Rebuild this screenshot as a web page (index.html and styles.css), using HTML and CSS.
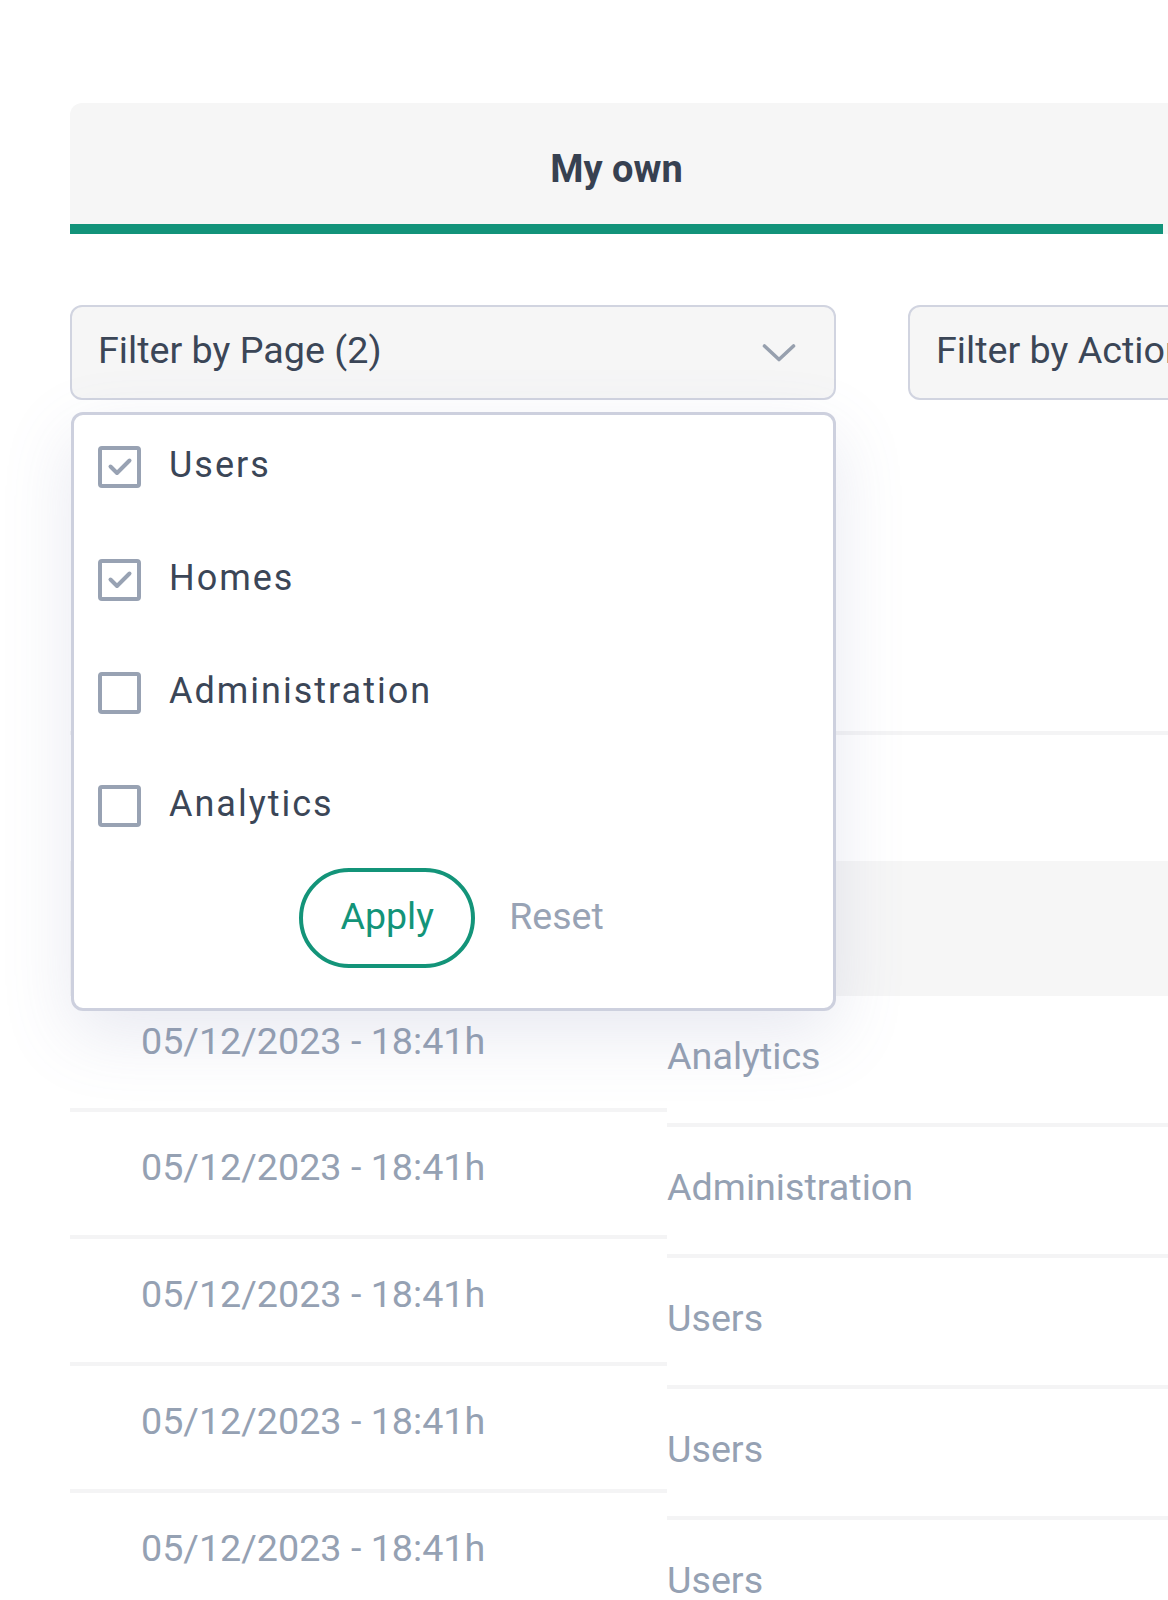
FILE: index.html
```html
<!DOCTYPE html>
<html lang="en">
<head>
<meta charset="utf-8">
<title>Activity log</title>
<link rel="stylesheet" href="styles.css">
</head>
<body>
<div class="page">
  <div class="tabs">
    <div class="tab tab-active">My own</div>
    <div class="tab"></div>
  </div>

  <div class="filters">
    <div class="filter-wrap">
      <div class="filter">
        <span class="filter-label">Filter by Page (2)</span>
        <svg class="chevron" width="34" height="20" viewBox="0 0 34 20"><path d="M2.5 3 L17 16.5 L31.5 3" fill="none" stroke="#97a0ae" stroke-width="3.6" stroke-linecap="round" stroke-linejoin="round"/></svg>
      </div>
      <div class="dropdown">
        <label class="option">
          <span class="box checked"><svg width="34" height="34" viewBox="0 0 34 34"><path d="M7.5 16.5 L14 23 L26.5 10.5" fill="none" stroke="#98a2b3" stroke-width="4" stroke-linecap="round" stroke-linejoin="round"/></svg></span>
          <span class="option-label">Users</span>
        </label>
        <label class="option">
          <span class="box checked"><svg width="34" height="34" viewBox="0 0 34 34"><path d="M7.5 16.5 L14 23 L26.5 10.5" fill="none" stroke="#98a2b3" stroke-width="4" stroke-linecap="round" stroke-linejoin="round"/></svg></span>
          <span class="option-label">Homes</span>
        </label>
        <label class="option">
          <span class="box"></span>
          <span class="option-label">Administration</span>
        </label>
        <label class="option">
          <span class="box"></span>
          <span class="option-label">Analytics</span>
        </label>
        <div class="actions">
          <button class="btn-apply">Apply</button>
          <button class="btn-reset">Reset</button>
        </div>
      </div>
    </div>
    <div class="filter">
      <span class="filter-label">Filter by Action</span>
      <svg class="chevron" width="34" height="20" viewBox="0 0 34 20"><path d="M2.5 3 L17 16.5 L31.5 3" fill="none" stroke="#97a0ae" stroke-width="3.6" stroke-linecap="round" stroke-linejoin="round"/></svg>
    </div>
  </div>

  <div class="summary"></div>

  <div class="table">
    <div class="thead"></div>
    <div class="tbody">
      <div class="col col-date">
        <div class="cell">05/12/2023 - 18:41h</div>
        <div class="cell">05/12/2023 - 18:41h</div>
        <div class="cell">05/12/2023 - 18:41h</div>
        <div class="cell">05/12/2023 - 18:41h</div>
        <div class="cell">05/12/2023 - 18:41h</div>
      </div>
      <div class="col col-page">
        <div class="cell">Analytics</div>
        <div class="cell">Administration</div>
        <div class="cell">Users</div>
        <div class="cell">Users</div>
        <div class="cell">Users</div>
      </div>
    </div>
  </div>
</div>
</body>
</html>
```

FILE: styles.css
```css
html, body {
  margin: 0;
  padding: 0;
  background: #ffffff;
  overflow: hidden;
}

body {
  font-family: Roboto, "Liberation Sans", Arial, sans-serif;
  color: #3b4657;
}

.page {
  width: 2400px;
  padding: 103px 0 0 70px;
  box-sizing: border-box;
}

/* Tabs */
.tabs {
  display: flex;
  background: #f6f6f6;
  border-top-left-radius: 12px;
  height: 131px;
}

.tab {
  width: 1093px;
  box-sizing: border-box;
  display: flex;
  align-items: center;
  justify-content: center;
  padding-top: 10px;
  font-size: 38px;
  font-weight: 700;
  color: #374151;
}

.tab-active {
  border-bottom: 10px solid #12937a;
}

/* Filters */
.filters {
  display: flex;
  gap: 72px;
  margin-top: 71px;
}

.filter-wrap {
  position: relative;
}

.filter {
  width: 766px;
  height: 95px;
  box-sizing: border-box;
  border: 2px solid #d1d4e0;
  border-radius: 12px;
  background: #f6f6f6;
  display: flex;
  align-items: center;
  justify-content: space-between;
  padding: 0 38px 0 26px;
}

.filter-label {
  font-size: 37.7px;
  color: #3b4657;
  padding-bottom: 5px;
  white-space: nowrap;
}

.chevron {
  display: block;
  flex-shrink: 0;
}

/* Dropdown */
.dropdown {
  position: absolute;
  top: 107px;
  left: 1px;
  width: 765px;
  box-sizing: border-box;
  background: #ffffff;
  border: 3px solid #cdd0de;
  border-radius: 12px;
  padding: 31px 24px 40px 24px;
  box-shadow: 0 24px 70px rgba(110, 120, 165, 0.16);
  display: flex;
  flex-direction: column;
  gap: 71px;
  z-index: 5;
}

.option {
  display: flex;
  align-items: center;
  gap: 28px;
  height: 42px;
}

.box {
  width: 43px;
  height: 42px;
  box-sizing: border-box;
  border: 4px solid #98a2b3;
  border-radius: 4px;
  display: flex;
  align-items: center;
  justify-content: center;
}

.box svg {
  display: block;
}

.option-label {
  font-size: 36px;
  letter-spacing: 2px;
  color: #3b4657;
  padding-bottom: 4px;
}

.actions {
  display: flex;
  justify-content: center;
  align-items: center;
  gap: 34px;
  margin-top: -30px;
}

.btn-apply {
  width: 176px;
  height: 100px;
  box-sizing: border-box;
  border: 4px solid #139479;
  border-radius: 50px;
  background: #ffffff;
  color: #139479;
  font-family: inherit;
  font-size: 37.5px;
  padding: 0 0 4px 0;
}

.btn-reset {
  border: 0;
  background: none;
  font-family: inherit;
  font-size: 37.5px;
  color: #98a3b5;
  padding: 0 4px 4px 0;
}

/* Summary row */
.summary {
  height: 331px;
  border-bottom: 4px solid #f4f4f5;
}

/* Table */
.table {
  margin-top: 126px;
}

.thead {
  height: 135px;
  background: #f6f6f6;
}

.tbody {
  display: flex;
}

.col {
  display: flex;
  flex-direction: column;
}

.col-date {
  width: 597px;
}

.col-page {
  width: 1200px;
}

.cell {
  font-size: 37.7px;
  line-height: 44px;
  color: #95a1b3;
  border-bottom: 4px solid #f4f4f5;
  box-sizing: border-box;
}

.col-date .cell {
  height: 127px;
  padding: 33px 0 0 71px;
}

.col-date .cell:first-child {
  height: 116px;
  padding-top: 23px;
}

.col-page .cell {
  height: 131px;
  padding: 38px 0 0 0;
}
```
